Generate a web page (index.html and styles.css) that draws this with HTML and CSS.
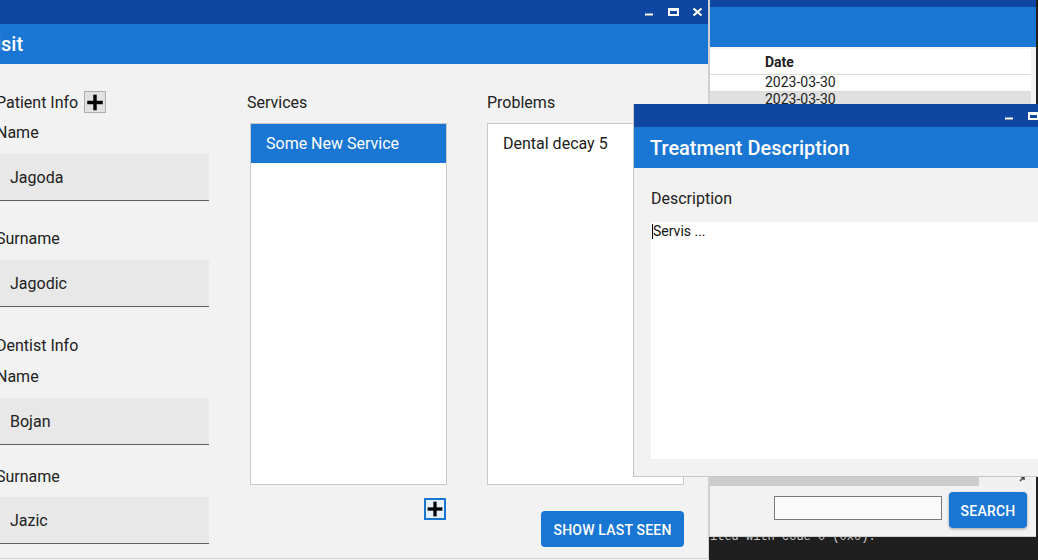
FILE: index.html
```html
<!DOCTYPE html>
<html>
<head>
<meta charset="utf-8">
<title>Visit</title>
<link rel="stylesheet" href="styles.css">
</head>
<body>
<div class="desktop">

  <div class="terminal"><span class="term-text">ited with code 0 (0x0).</span></div>

  <section class="win win-visit">
    <div class="titlebar tb-24">
      <svg class="ctrl" viewBox="0 0 24 24"><rect x="9" y="13.5" width="8" height="2" fill="#fff"/></svg>
      <svg class="ctrl" viewBox="0 0 24 24"><rect x="9" y="9" width="9" height="6" fill="none" stroke="#fff" stroke-width="2"/><rect x="8" y="8" width="11" height="3" fill="#fff"/></svg>
      <svg class="ctrl" viewBox="0 0 24 24"><path d="M9.5 8.5 L17.5 15.5 M17.5 8.5 L9.5 15.5" stroke="#fff" stroke-width="2.2" fill="none"/></svg>
    </div>
    <header class="win-header visit-header">Visit</header>
    <div class="visit-body">
      <div class="col-info">
        <div class="section-row">
          <span class="section-title">Patient Info</span>
          <button class="plus-btn"><svg viewBox="0 0 22 22" width="20" height="19"><rect x="2" y="9" width="18" height="4" fill="#000"/><rect x="9" y="2" width="4" height="18" fill="#000"/></svg></button>
        </div>
        <div class="label mt-9">Name</div>
        <div class="field mt-12">Jagoda</div>
        <div class="label mt-27">Surname</div>
        <div class="field mt-12">Jagodic</div>
        <div class="label mt-28">Dentist Info</div>
        <div class="label mt-11">Name</div>
        <div class="field mt-12">Bojan</div>
        <div class="label mt-21">Surname</div>
        <div class="field mt-11">Jazic</div>
      </div>

      <div class="col-list col-services">
        <div class="label">Services</div>
        <div class="listbox lb-services">
          <div class="list-item selected">Some New Service</div>
        </div>
        <div class="list-footer mt-13">
          <button class="plus-btn focused"><svg viewBox="0 0 22 22" width="18" height="18"><rect x="2" y="9" width="18" height="4" fill="#000"/><rect x="9" y="2" width="4" height="18" fill="#000"/></svg></button>
        </div>
      </div>

      <div class="col-list col-problems">
        <div class="label">Problems</div>
        <div class="listbox">
          <div class="list-item">Dental decay 5</div>
        </div>
        <div class="list-footer mt-26">
          <button class="primary-btn btn-last">Show last seen</button>
        </div>
      </div>
    </div>
  </section>

  <section class="win win-history">
    <div class="titlebar tb-23"></div>
    <header class="win-header history-header"></header>
    <div class="history-body">
      <div class="grid">
        <div class="grid-head">Date</div>
        <div class="grid-row">2023-03-30</div>
        <div class="grid-row alt">2023-03-30</div>
      </div>
      <div class="hscroll">
        <div class="hthumb"></div>
        <svg class="harrow" viewBox="0 0 10 10" width="10" height="10"><path d="M2 6 L6 2 M3 2 L6 2 L6 5" stroke="#444" stroke-width="1.5" fill="none"/></svg>
      </div>
      <div class="search-bar">
        <div class="search-input"></div>
        <button class="primary-btn btn-search">Search</button>
      </div>
    </div>
  </section>

  <section class="win win-treatment">
    <div class="titlebar tb-23">
      <svg class="ctrl" viewBox="0 0 24 24"><rect x="9" y="13.5" width="8" height="2" fill="#fff"/></svg>
      <svg class="ctrl" viewBox="0 0 24 24"><rect x="9" y="9" width="9" height="6" fill="none" stroke="#fff" stroke-width="2"/><rect x="8" y="8" width="11" height="3" fill="#fff"/></svg>
      <svg class="ctrl" viewBox="0 0 24 24"><path d="M9.5 8.5 L17.5 15.5 M17.5 8.5 L9.5 15.5" stroke="#fff" stroke-width="2.2" fill="none"/></svg>
    </div>
    <header class="win-header treatment-header">Treatment Description</header>
    <div class="treatment-body">
      <div class="label">Description</div>
      <div class="textarea"><span class="caret"></span>Servis ...</div>
    </div>
  </section>

</div>
</body>
</html>
```

FILE: styles.css
```css
* { box-sizing: border-box; margin: 0; padding: 0; }

html, body {
  width: 1038px;
  height: 560px;
  overflow: hidden;
}

body {
  font-family: Roboto, "Noto Sans", sans-serif;
  color: #212121;
  background: #f2f2f2;
}

.desktop {
  position: relative;
  width: 1038px;
  height: 560px;
  overflow: hidden;
  background: #f2f2f2;
}

/* ---------- generic window ---------- */
.win {
  position: absolute;
  display: flex;
  flex-direction: column;
  background: #f2f2f2;
}

.titlebar {
  flex: none;
  background: #0d47a1;
  display: flex;
  justify-content: flex-end;
  align-items: flex-start;
}
.tb-24 { height: 24px; }
.tb-23 { height: 23px; }

.ctrl {
  display: block;
  width: 24px;
  height: 24px;
}

.win-header {
  flex: none;
  background: #1976d2;
  color: #fff;
  font-size: 20px;
  font-weight: 500;
  display: flex;
  align-items: center;
}

.label {
  font-size: 16px;
  line-height: 20px;
  height: 20px;
  padding-top: 1px;
  color: #212121;
}

.mt-9 { margin-top: 9px; }
.mt-11 { margin-top: 11px; }
.mt-12 { margin-top: 12px; }
.mt-13 { margin-top: 13px; }
.mt-21 { margin-top: 21px; }
.mt-26 { margin-top: 26px; }
.mt-27 { margin-top: 27px; }
.mt-28 { margin-top: 28px; }

/* ---------- visit window ---------- */
.win-visit {
  left: -20px;
  top: 0;
  width: 729px;
  height: 559px;
  border-right: 1px solid #d0d0d0;
  border-bottom: 1px solid #d4d4d4;
  z-index: 2;
}

.visit-header {
  height: 40px;
  padding-left: 3px;
}

.visit-body {
  flex: 1;
  display: flex;
  align-items: flex-start;
  padding: 27px 0 0 16px;
}

.col-info {
  width: 213px;
  display: flex;
  flex-direction: column;
}

.section-row {
  display: flex;
  align-items: center;
  height: 22px;
  gap: 6px;
  font-size: 16px;
  line-height: 20px;
}

.section-title {
  padding-top: 1px;
}

.plus-btn {
  width: 22px;
  height: 22px;
  background: #e1e1e1;
  border: 1px solid #adadad;
  display: flex;
  align-items: center;
  justify-content: center;
}
.plus-btn svg { display: block; }
.plus-btn.focused {
  border: 2px solid #1976d2;
  background: #e5f1fb;
}

.field {
  height: 47px;
  background: #e8e8e8;
  border-bottom: 1px solid #5f5f5f;
  padding-left: 14px;
  font-size: 16px;
  line-height: 47px;
  color: #212121;
}

.col-list {
  display: flex;
  flex-direction: column;
  padding-top: 1px;
}

.col-services {
  margin-left: 38px;
  width: 200px;
}
.col-services .lb-services {
  margin-left: 3px;
}

.col-problems {
  margin-left: 40px;
  width: 197px;
}

.listbox {
  margin-top: 11px;
  height: 362px;
  background: #fff;
  border: 1px solid #cacaca;
}

.list-item {
  height: 39px;
  line-height: 39px;
  padding-left: 15px;
  font-size: 16px;
  color: #212121;
}
.list-item.selected {
  background: #1976d2;
  color: #fff;
}

.list-footer {
  display: flex;
  justify-content: flex-end;
}
.col-services .list-footer { padding-right: 1px; }

.primary-btn {
  background: #1976d2;
  color: #fff;
  border: none;
  border-radius: 4px;
  font-family: Roboto, "Noto Sans", sans-serif;
  font-size: 14px;
  font-weight: 500;
  text-transform: uppercase;
  letter-spacing: 0.2px;
  display: flex;
  align-items: center;
  justify-content: center;
  padding-top: 1px;
}

.btn-last {
  width: 143px;
  height: 36px;
}

/* ---------- history window ---------- */
.win-history {
  left: 709px;
  top: -16px;
  width: 327px;
  height: 553px;
  border-left: 1px solid #d0d0d0;
  border-bottom: 1px solid #d0d0d0;
  z-index: 3;
}

.history-header { height: 40px; }

.history-body {
  flex: 1;
  display: flex;
  flex-direction: column;
  padding: 2px 5px 0 0;
}

.grid {
  flex: 1;
  background: #fff;
  font-size: 14px;
}

.grid-head {
  height: 26px;
  line-height: 27px;
  padding-left: 55px;
  font-weight: 700;
  border-bottom: 1px solid #dcdcdc;
}

.grid-row {
  height: 17px;
  line-height: 15px;
  padding-left: 55px;
  border-bottom: 1px solid #dcdcdc;
}
.grid-row.alt { background: #e0e0e0; }

.hscroll {
  flex: none;
  height: 10px;
  display: flex;
  align-items: flex-start;
  background: #f0f0f0;
}
.hthumb {
  width: 269px;
  height: 10px;
  background: #cdcdcd;
}
.harrow {
  margin-left: 39px;
  margin-top: -1px;
}

.search-bar {
  flex: none;
  height: 50px;
  display: flex;
  justify-content: flex-end;
  align-items: flex-start;
  gap: 7px;
  padding-right: 4px;
}

.search-input {
  width: 168px;
  height: 24px;
  margin-top: 10px;
  background: #fbfbfb;
  border: 1px solid #7a7a7a;
}

.btn-search {
  width: 78px;
  height: 36px;
  margin-top: 6px;
  box-shadow: 0 1px 3px rgba(0, 0, 0, 0.35);
}

/* ---------- treatment window ---------- */
.win-treatment {
  left: 633px;
  top: 104px;
  width: 435px;
  height: 373px;
  border-left: 1px solid #c8c8c8;
  border-bottom: 1px solid #c8c8c8;
  z-index: 4;
}

.treatment-header {
  height: 41px;
  padding-left: 16px;
}

.treatment-body {
  flex: 1;
  padding: 20px 17px 0 17px;
  display: flex;
  flex-direction: column;
}

.textarea {
  margin-top: 14px;
  height: 237px;
  background: #fff;
  padding: 1px 0 0 1px;
  font-size: 14px;
  line-height: 16px;
  color: #111;
}

.caret {
  display: inline-block;
  width: 1px;
  height: 15px;
  background: #000;
  vertical-align: -3px;
}

/* ---------- terminal behind ---------- */
.terminal {
  position: absolute;
  left: 709px;
  top: 0;
  right: 0;
  bottom: 0;
  background: #1f1f1f;
  z-index: 1;
  padding: 525px 0 0 1px;
}

.term-text {
  font-family: "Liberation Mono", "DejaVu Sans Mono", monospace;
  font-size: 12px;
  line-height: 14px;
  color: #cccccc;
  white-space: pre;
}
```
